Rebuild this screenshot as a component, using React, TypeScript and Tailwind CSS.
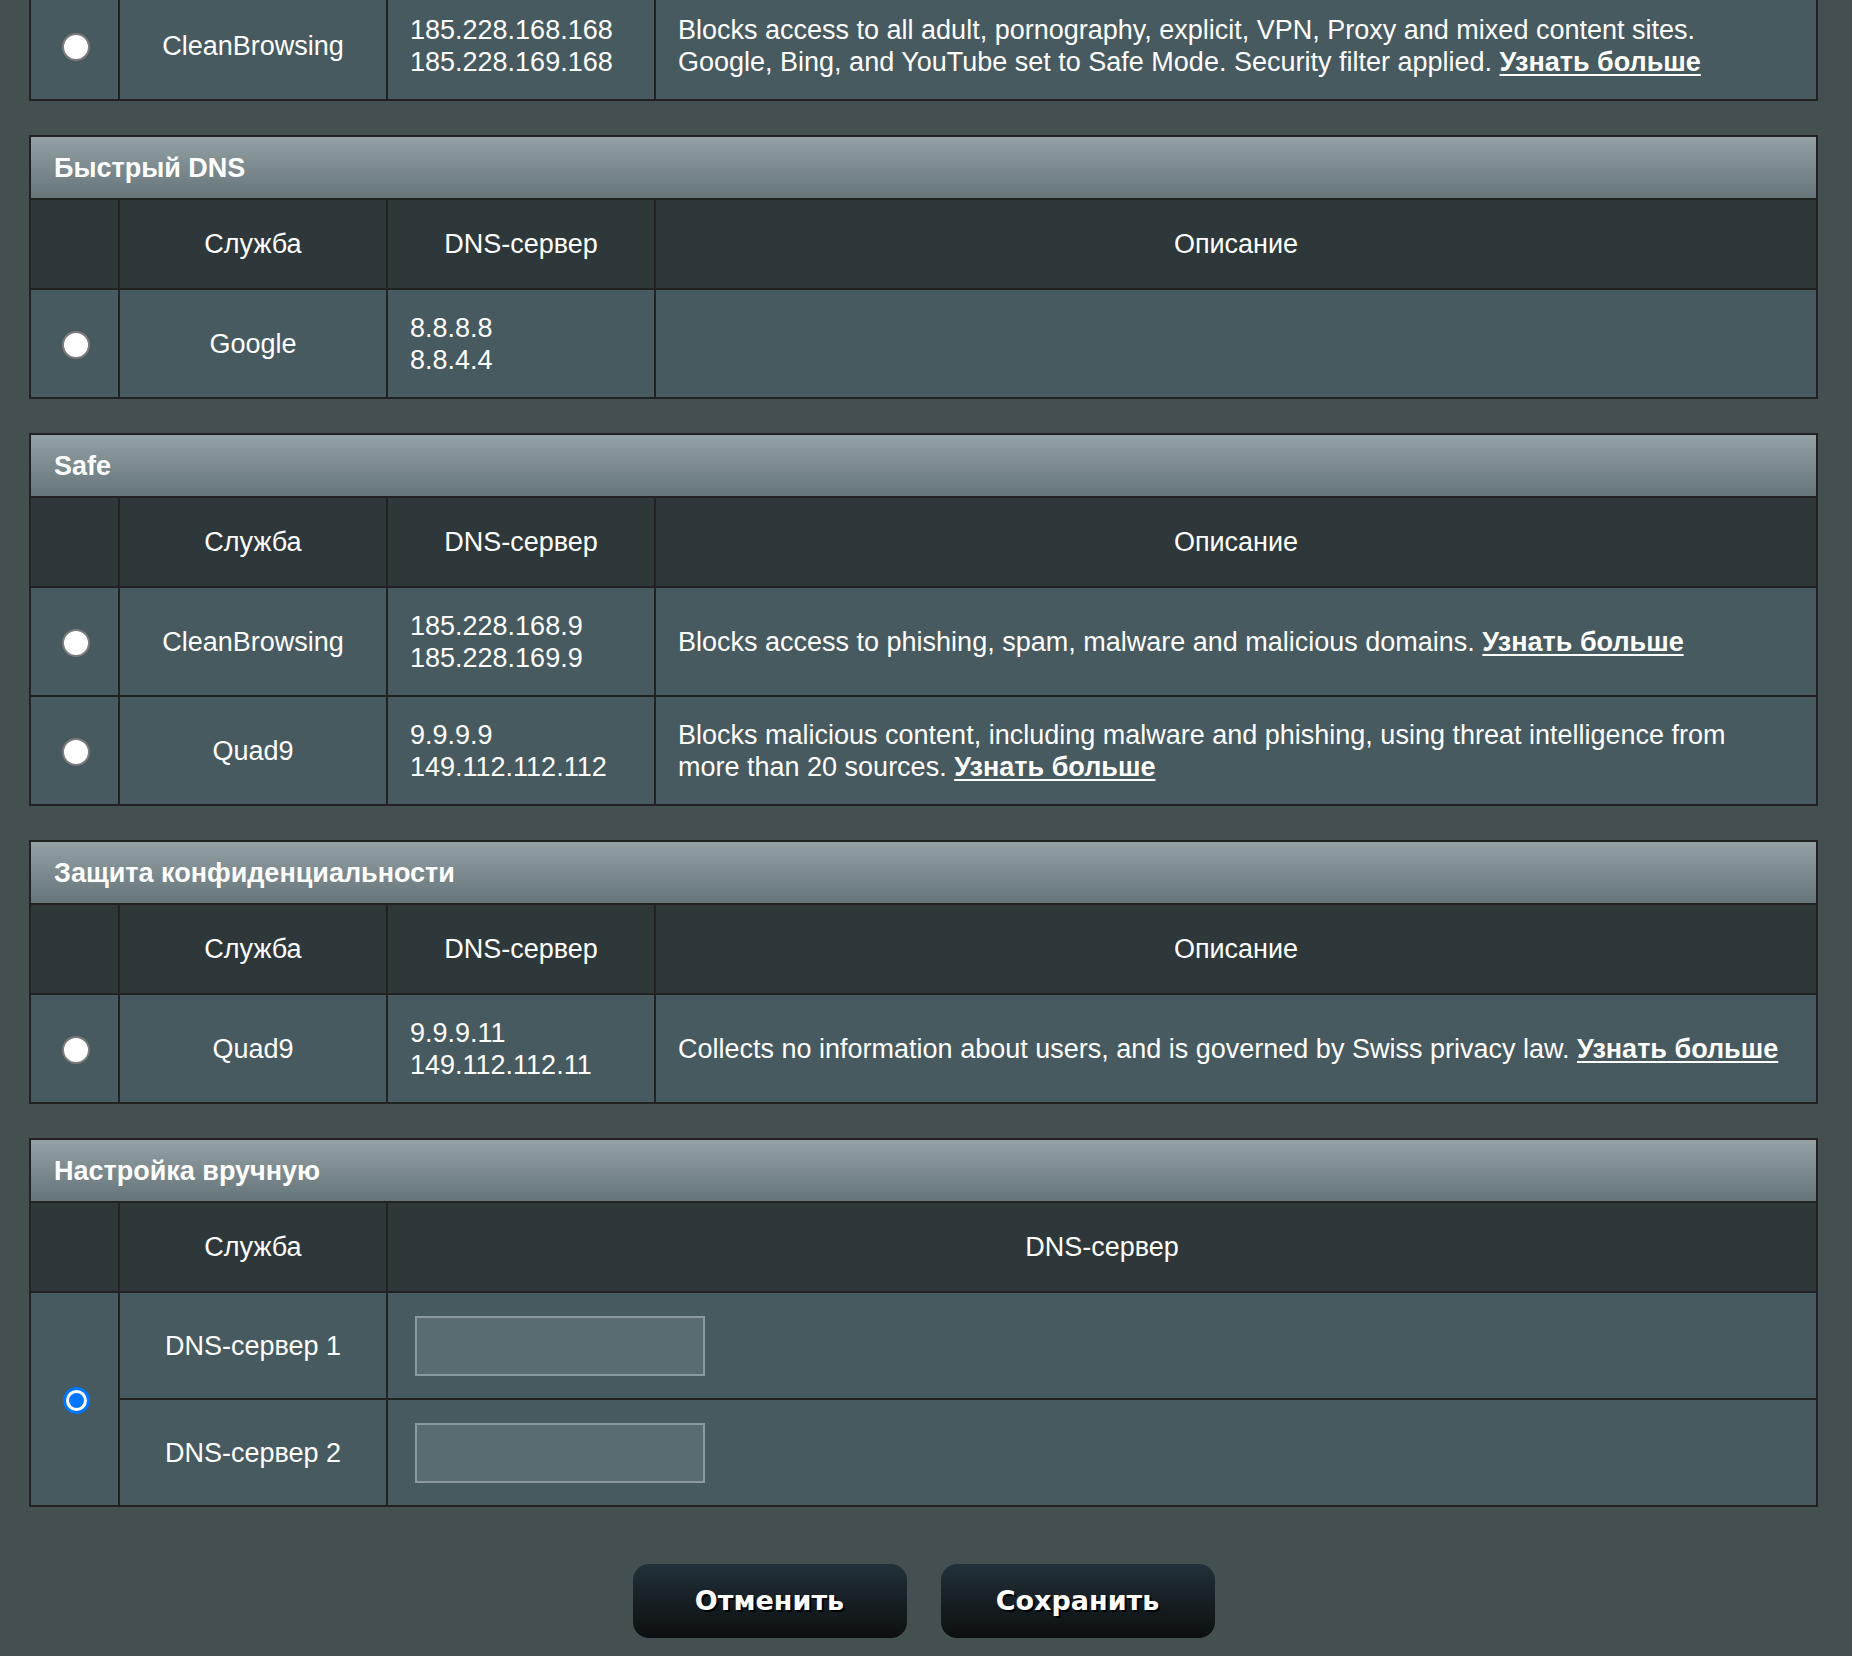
import React from "react";

type Row = {
  name: string;
  servers: string[];
  desc?: React.ReactNode;
};

const cell = "border-2 border-[#222]";

const More = () => (
  <a href="#" className="font-bold underline underline-offset-[3px] decoration-2">
    Узнать больше
  </a>
);

const Radio = ({ checked = false }: { checked?: boolean }) =>
  checked ? (
    <div className="mx-auto w-[27px] h-[27px] rounded-full bg-[#0075ff] p-[3px]">
      <div className="w-full h-full rounded-full bg-white p-[3px]">
        <div className="w-full h-full rounded-full bg-[#0075ff]" />
      </div>
    </div>
  ) : (
    <div className="mx-auto w-[28px] h-[28px] rounded-full bg-white border-2 border-[#7a7a7a]" />
  );

const Cols = () => (
  <colgroup>
    <col className="w-[89px]" />
    <col className="w-[268px]" />
    <col className="w-[268px]" />
    <col />
  </colgroup>
);

const DataRow = ({ row }: { row: Row }) => (
  <tr className="h-[109px] bg-[#475a60]">
    <td className={cell}>
      <div className="pt-[3px] pl-[3px]">
        <Radio />
      </div>
    </td>
    <td className={`${cell} text-center`}>{row.name}</td>
    <td className={`${cell} pl-[22px]`}>
      {row.servers.map((s) => (
        <div key={s}>{s}</div>
      ))}
    </td>
    <td className={`${cell} pl-[22px] pr-4`}>{row.desc}</td>
  </tr>
);

const Header = ({ title }: { title: string }) => (
  <tr className="h-[63px]">
    <th
      colSpan={4}
      className={`${cell} bg-gradient-to-b from-[#94a1a5] to-[#66757a] pl-[23px] text-left font-bold`}
    >
      {title}
    </th>
  </tr>
);

const Section = ({ title, rows }: { title: string; rows: Row[] }) => (
  <table className="mt-[34px] w-full table-fixed border-collapse">
    <Cols />
    <thead>
      <Header title={title} />
      <tr className="h-[90px] bg-[#2e383b]">
        <th className={cell} />
        <th className={`${cell} font-normal`}>Служба</th>
        <th className={`${cell} font-normal`}>DNS-сервер</th>
        <th className={`${cell} font-normal`}>Описание</th>
      </tr>
    </thead>
    <tbody>
      {rows.map((r) => (
        <DataRow key={r.name + r.servers[0]} row={r} />
      ))}
    </tbody>
  </table>
);

const sections: { title: string; rows: Row[] }[] = [
  {
    title: "Быстрый DNS",
    rows: [{ name: "Google", servers: ["8.8.8.8", "8.8.4.4"] }],
  },
  {
    title: "Safe",
    rows: [
      {
        name: "CleanBrowsing",
        servers: ["185.228.168.9", "185.228.169.9"],
        desc: (
          <>
            Blocks access to phishing, spam, malware and malicious domains. <More />
          </>
        ),
      },
      {
        name: "Quad9",
        servers: ["9.9.9.9", "149.112.112.112"],
        desc: (
          <>
            Blocks malicious content, including malware and phishing, using threat intelligence from
            <br />
            more than 20 sources. <More />
          </>
        ),
      },
    ],
  },
  {
    title: "Защита конфиденциальности",
    rows: [
      {
        name: "Quad9",
        servers: ["9.9.9.11", "149.112.112.11"],
        desc: (
          <>
            Collects no information about users, and is governed by Swiss privacy law. <More />
          </>
        ),
      },
    ],
  },
];

const Button = ({ label }: { label: string }) => (
  <button className="w-[274px] h-[74px] rounded-[16px] bg-gradient-to-b from-[#22313a] to-[#0c0f10] font-['DejaVu_Sans',sans-serif] text-[27px] font-bold text-white [text-shadow:2px_2px_0_#000]">
    {label}
  </button>
);

const inputCls =
  "block w-[290px] h-[60px] border-2 border-[#8b9a9e] bg-[#5a6c72] px-2 text-white outline-none";

export default function App() {
  return (
    <div className="min-h-screen overflow-hidden bg-[#434f51] font-['Liberation_Sans',Arial,sans-serif] text-[27px] leading-[32px] text-white">
      <div className="ml-[29px] w-[1789px] pb-[19px]">
        <table className="-mt-[10px] w-full table-fixed border-collapse">
          <Cols />
          <tbody>
            <DataRow
              row={{
                name: "CleanBrowsing",
                servers: ["185.228.168.168", "185.228.169.168"],
                desc: (
                  <>
                    Blocks access to all adult, pornography, explicit, VPN, Proxy and mixed content sites.
                    <br />
                    Google, Bing, and YouTube set to Safe Mode. Security filter applied. <More />
                  </>
                ),
              }}
            />
          </tbody>
        </table>

        {sections.map((s) => (
          <Section key={s.title} title={s.title} rows={s.rows} />
        ))}

        <table className="mt-[34px] w-full table-fixed border-collapse">
          <Cols />
          <thead>
            <Header title="Настройка вручную" />
            <tr className="h-[90px] bg-[#2e383b]">
              <th className={cell} />
              <th className={`${cell} font-normal`}>Служба</th>
              <th colSpan={2} className={`${cell} font-normal`}>
                DNS-сервер
              </th>
            </tr>
          </thead>
          <tbody className="bg-[#475a60]">
            <tr className="h-[107px]">
              <td rowSpan={2} className={cell}>
                <div className="pt-[3px] pl-[3px]">
                  <Radio checked />
                </div>
              </td>
              <td className={`${cell} text-center`}>DNS-сервер 1</td>
              <td colSpan={2} className={`${cell} pl-[27px]`}>
                <input className={inputCls} />
              </td>
            </tr>
            <tr className="h-[107px]">
              <td className={`${cell} text-center`}>DNS-сервер 2</td>
              <td colSpan={2} className={`${cell} pl-[27px]`}>
                <input className={inputCls} />
              </td>
            </tr>
          </tbody>
        </table>

        <div className="mt-[57px] flex justify-center gap-[34px]">
          <Button label="Отменить" />
          <Button label="Сохранить" />
        </div>
      </div>
    </div>
  );
}
